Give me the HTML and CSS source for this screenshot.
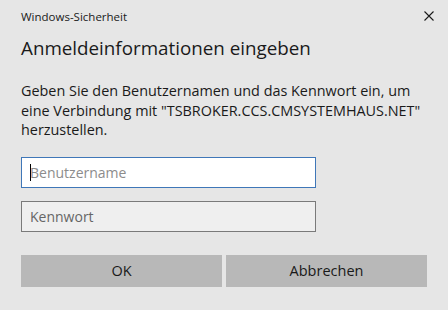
FILE: index.html
```html
<!DOCTYPE html>
<html lang="de">
<head>
  <meta charset="UTF-8" />
  <title>Windows-Sicherheit</title>
  <link rel="stylesheet" href="styles.css">
</head>
<body>
  <div class="dialog">
    <div class="titlebar">
      <span class="app-name">Windows-Sicherheit</span>
      <svg class="close" width="10" height="10" viewBox="0 0 10 10">
        <path d="M0.5 0.5 L9.5 9.5 M9.5 0.5 L0.5 9.5" stroke="#1a1a1a" stroke-width="1.1" fill="none"/>
      </svg>
    </div>

    <h1>Anmeldeinformationen eingeben</h1>

    <p class="message">Geben Sie den Benutzernamen und das Kennwort ein, um<br>eine Verbindung mit "TSBROKER.CCS.CMSYSTEMHAUS.NET"<br>herzustellen.</p>

    <div class="fields">
      <div class="field active"><span class="caret"></span><span class="hint">Benutzername</span></div>
      <div class="field"><span class="value">Kennwort</span></div>
    </div>

    <div class="buttons">
      <button type="button">OK</button>
      <button type="button">Abbrechen</button>
    </div>
  </div>
</body>
</html>
```

FILE: styles.css
```css
body {
  margin: 0;
  background-color: #e6e6e6;
  font-family: "Open Sans", "Noto Sans", sans-serif;
  color: #1a1a1a;
}

.dialog {
  width: 448px;
  height: 310px;
  box-sizing: border-box;
  padding: 0 21px;
}

.titlebar {
  display: flex;
  justify-content: space-between;
  align-items: center;
  height: 33px;
}

.app-name {
  font-size: 11.5px;
  margin-top: -1px;
}

.close {
  margin-right: -7px;
  margin-top: -1px;
}

h1 {
  margin: 0;
  font-size: 18.8px;
  font-weight: 400;
  line-height: 30px;
}

.message {
  margin: 18px 0 0;
  font-size: 14.4px;
  line-height: 19.5px;
  white-space: nowrap;
}

.fields {
  margin-top: 17px;
  display: flex;
  flex-direction: column;
  gap: 13px;
}

.field {
  width: 295px;
  height: 31px;
  box-sizing: border-box;
  border: 1px solid #7a7a7a;
  background-color: #efefef;
  display: flex;
  align-items: center;
  padding-left: 8px;
  font-size: 14px;
}

.field.active {
  border-color: #3f77b8;
  background-color: #ffffff;
}

.caret {
  width: 1px;
  height: 17px;
  background: #000;
  margin-right: -1px;
}

.hint {
  color: #8c8c8c;
}

.value {
  color: #666;
}

.buttons {
  margin-top: 23px;
  display: flex;
  gap: 4px;
}

button {
  width: 201px;
  height: 32px;
  border: none;
  background-color: #b8b8b8;
  font-family: inherit;
  font-size: 14.5px;
  color: #1a1a1a;
  padding: 0;
}
```
